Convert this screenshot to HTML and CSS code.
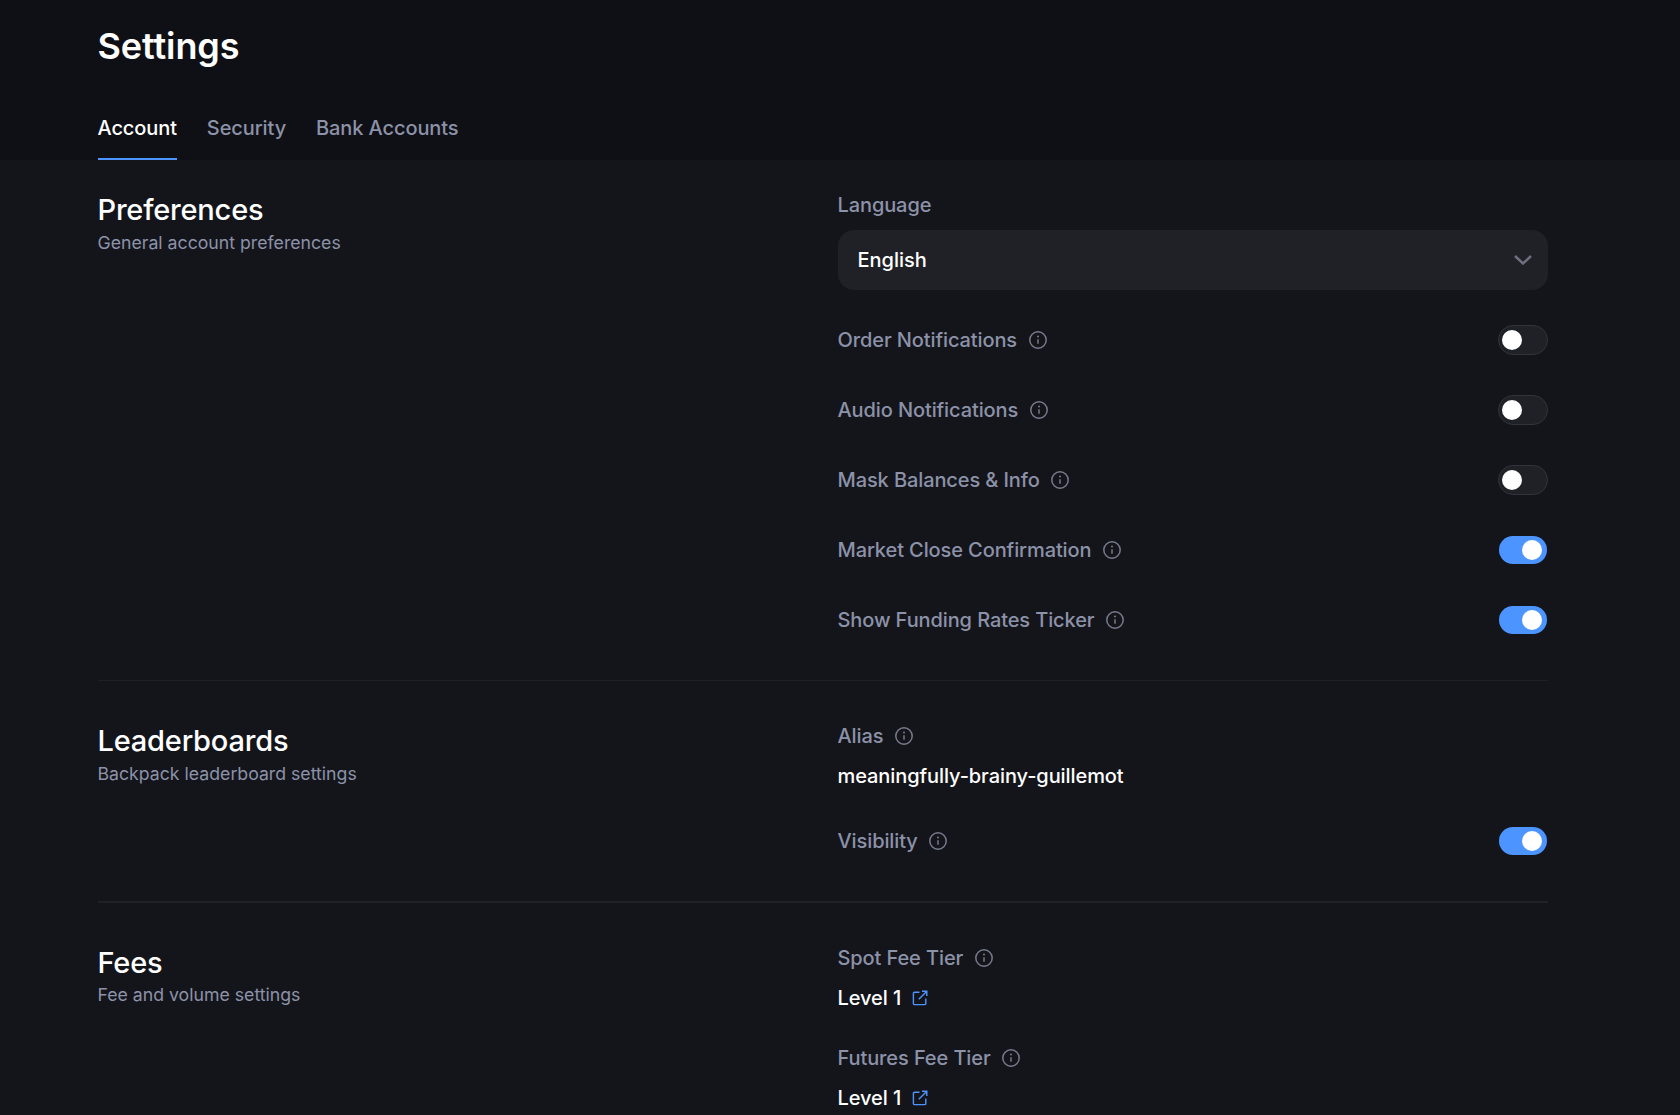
FILE: index.html
```html
<!DOCTYPE html>
<html lang="en">
<head>
<meta charset="utf-8">
<title>Settings</title>
<link rel="stylesheet" href="styles.css">
</head>
<body>
<svg class="defs" width="0" height="0" aria-hidden="true">
  <symbol id="info" viewBox="0 0 18 18">
    <circle cx="9" cy="9" r="8.2" fill="none" stroke="currentColor" stroke-width="1.5"/>
    <path d="M9 8.200v4.500" fill="none" stroke="currentColor" stroke-width="1.5"/>
    <circle cx="9" cy="5.600" r="1" fill="currentColor"/>
  </symbol>
  <symbol id="ext" viewBox="0 0 16 16">
    <path d="M7.500 2.200H2.600a1.200 1.200 0 0 0-1.200 1.200v10a1.200 1.200 0 0 0 1.200 1.200h10a1.200 1.200 0 0 0 1.200-1.200V8.500M6.800 9.200 14.600 1.400M10 1.200h4.800V6" fill="none" stroke="currentColor" stroke-width="1.400"/>
  </symbol>
</svg>
<header class="page-head">
  <h1 class="title">Settings</h1>
  <nav class="tabs">
    <a class="tab tab-active">Account</a>
    <a class="tab">Security</a>
    <a class="tab">Bank Accounts</a>
  </nav>
</header>
<main class="content">
  <section class="section section-prefs">
    <div class="intro">
      <h2 class="heading">Preferences</h2>
      <p class="sub">General account preferences</p>
    </div>
    <div class="fields">
      <div class="field-label">Language</div>
      <div class="select">
        <span>English</span>
        <svg class="chevron" viewBox="0 0 18 10" width="18" height="10"><path d="M1 1 9 8.500 17 1" fill="none" stroke="currentColor" stroke-width="2.400"/></svg>
      </div>
      <div class="toggle-list">
        <div class="row"><span class="label">Order Notifications<svg class="info"><use href="#info"/></svg></span><span class="switch"><i class="knob"></i></span></div>
        <div class="row"><span class="label">Audio Notifications<svg class="info"><use href="#info"/></svg></span><span class="switch"><i class="knob"></i></span></div>
        <div class="row"><span class="label">Mask Balances &amp; Info<svg class="info"><use href="#info"/></svg></span><span class="switch"><i class="knob"></i></span></div>
        <div class="row"><span class="label">Market Close Confirmation<svg class="info"><use href="#info"/></svg></span><span class="switch switch-on"><i class="knob"></i></span></div>
        <div class="row"><span class="label">Show Funding Rates Ticker<svg class="info"><use href="#info"/></svg></span><span class="switch switch-on"><i class="knob"></i></span></div>
      </div>
    </div>
  </section>
  <section class="section section-board">
    <div class="intro">
      <h2 class="heading">Leaderboards</h2>
      <p class="sub">Backpack leaderboard settings</p>
    </div>
    <div class="fields">
      <div class="label">Alias<svg class="info"><use href="#info"/></svg></div>
      <div class="value alias">meaningfully-brainy-guillemot</div>
      <div class="row row-vis"><span class="label">Visibility<svg class="info"><use href="#info"/></svg></span><span class="switch switch-on"><i class="knob"></i></span></div>
    </div>
  </section>
  <section class="section section-fees">
    <div class="intro">
      <h2 class="heading">Fees</h2>
      <p class="sub">Fee and volume settings</p>
    </div>
    <div class="fields tiers">
      <div class="tier">
        <div class="label">Spot Fee Tier<svg class="info"><use href="#info"/></svg></div>
        <div class="value">Level 1<svg class="ext"><use href="#ext"/></svg></div>
      </div>
      <div class="tier">
        <div class="label">Futures Fee Tier<svg class="info"><use href="#info"/></svg></div>
        <div class="value">Level 1<svg class="ext"><use href="#ext"/></svg></div>
      </div>
    </div>
  </section>
</main>
</body>
</html>
```
FILE: styles.css
```css
* { box-sizing: border-box; }
html, body { margin: 0; height: 100%; }
body {
  background: #14151b;
  font-family: Inter, "Liberation Sans", sans-serif;
  color: #fff;
  overflow: hidden;
}
.defs { position: absolute; }
.page-head {
  background: #0f1015;
  height: 160px;
  padding: 0 97.5px;
  display: flex;
  flex-direction: column;
  justify-content: space-between;
}
.title {
  margin: 24px 0 0;
  font-size: 36px;
  line-height: 44px;
  font-weight: 600;
  letter-spacing: -0.1px;
}
.tabs { display: flex; gap: 30px; }
.tab {
  font-size: 20px;
  line-height: 28px;
  font-weight: 500;
  letter-spacing: -0.1px;
  color: #8c92a8;
  padding-bottom: 16px;
}
.tab-active {
  color: #fff;
  border-bottom: 2px solid #4c94ff;
}
.content { padding: 0 132.5px 0 97.5px; }
.section {
  display: grid;
  grid-template-columns: 740px 710px;
  border-bottom: 1px solid #1f2027;
}
.section-prefs { padding-top: 31px; height: 521px; }
.section-board { padding-top: 41px; height: 222px; border-bottom: 2px solid #202127; }
.section-fees { padding-top: 41px; border-bottom: 0; }
.section-fees .sub { margin-top: 0; }
.heading {
  margin: 1px 0 0;
  font-size: 29px;
  line-height: 36px;
  font-weight: 500;
  letter-spacing: -0.2px;
}
.sub {
  margin: 1px 0 0;
  font-size: 17.7px;
  line-height: 28px;
  color: #8c92a8;
}
.field-label, .label {
  font-size: 20px;
  line-height: 28px;
  font-weight: 450;
  letter-spacing: -0.1px;
  color: #8c92a8;
}
.label { display: flex; align-items: center; }
.select {
  margin-top: 11px;
  height: 60px;
  border-radius: 16px;
  background: #202127;
  padding: 0 16px 0 20px;
  display: flex;
  align-items: center;
  justify-content: space-between;
  font-size: 20px;
  font-weight: 500;
}
.chevron { color: #6f7080; }
.toggle-list {
  margin-top: 15px;
  display: flex;
  flex-direction: column;
}
.row {
  height: 70px;
  display: flex;
  align-items: center;
  justify-content: space-between;
}
.info {
  width: 18px;
  height: 18px;
  margin-left: 11.5px;
  color: #767b8c;
}
.switch {
  width: 50px;
  height: 30px;
  border-radius: 15px;
  background: #202127;
  border: 1px solid #33343b;
  display: flex;
  align-items: center;
  padding-left: 3px;
}
.switch-on {
  background: #4c94ff;
  background-clip: padding-box;
  border-color: transparent;
  justify-content: flex-end;
  padding: 0 5px 0 0;
}
.knob {
  width: 20px;
  height: 20px;
  border-radius: 50%;
  background: #fff;
}
.value {
  font-size: 20px;
  line-height: 28px;
  font-weight: 500;
  letter-spacing: -0.08px;
  display: flex;
  align-items: center;
}
.alias { margin-top: 12px; }
.row-vis { margin-top: 16px; }
.ext {
  width: 16px;
  height: 16px;
  margin-left: 11px;
  color: #4c94ff;
}
.tiers { display: flex; flex-direction: column; gap: 32px; }
.tier { display: flex; flex-direction: column; gap: 12px; }
```
